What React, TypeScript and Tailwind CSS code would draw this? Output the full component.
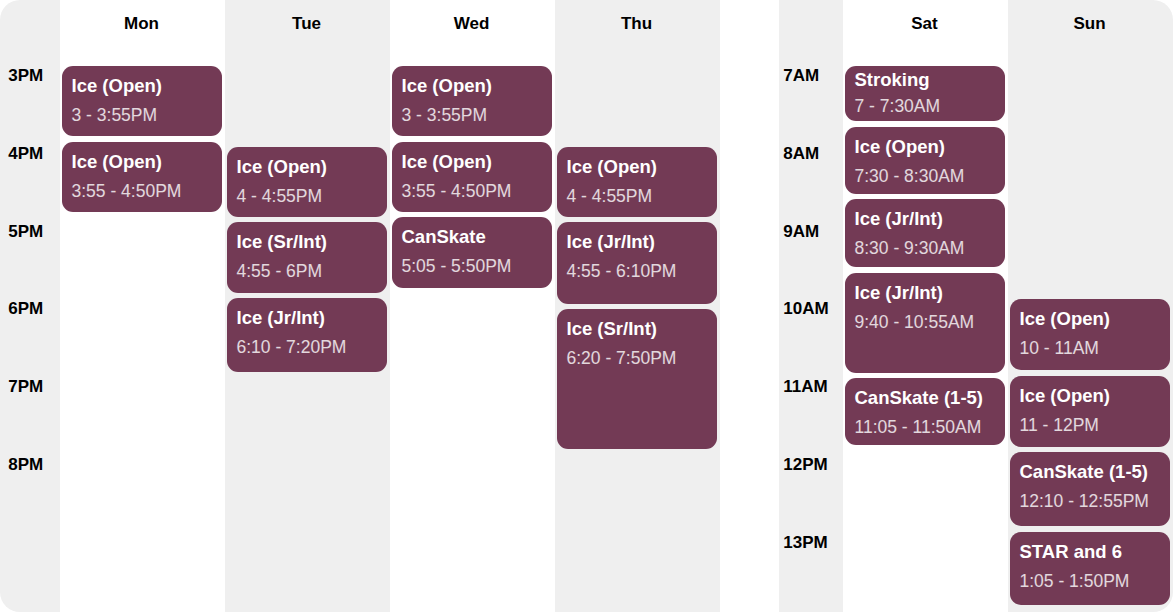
type Slot = {
  title: string;
  time: string;
  cls: string;
  compact?: boolean;
};

type Day = {
  name: string;
  bg: string;
  slots: Slot[];
};

const leftHours = ["3PM", "4PM", "5PM", "6PM", "7PM", "8PM"];
const rightHours = ["7AM", "8AM", "9AM", "10AM", "11AM", "12PM", "13PM"];

const weekdays: Day[] = [
  {
    name: "Mon",
    bg: "bg-white",
    slots: [
      { title: "Ice (Open)", time: "3 - 3:55PM", cls: "mt-[6px] h-[70px]" },
      { title: "Ice (Open)", time: "3:55 - 4:50PM", cls: "mt-[6px] h-[70px]" },
    ],
  },
  {
    name: "Tue",
    bg: "bg-[#efefef]",
    slots: [
      { title: "Ice (Open)", time: "4 - 4:55PM", cls: "mt-[87px] h-[70px]" },
      { title: "Ice (Sr/Int)", time: "4:55 - 6PM", cls: "mt-[5px] h-[71px]" },
      { title: "Ice (Jr/Int)", time: "6:10 - 7:20PM", cls: "mt-[5px] h-[74px]" },
    ],
  },
  {
    name: "Wed",
    bg: "bg-white",
    slots: [
      { title: "Ice (Open)", time: "3 - 3:55PM", cls: "mt-[6px] h-[70px]" },
      { title: "Ice (Open)", time: "3:55 - 4:50PM", cls: "mt-[6px] h-[70px]" },
      { title: "CanSkate", time: "5:05 - 5:50PM", cls: "mt-[5px] h-[71px]" },
    ],
  },
  {
    name: "Thu",
    bg: "bg-[#efefef]",
    slots: [
      { title: "Ice (Open)", time: "4 - 4:55PM", cls: "mt-[87px] h-[70px]" },
      { title: "Ice (Jr/Int)", time: "4:55 - 6:10PM", cls: "mt-[5px] h-[82px]" },
      { title: "Ice (Sr/Int)", time: "6:20 - 7:50PM", cls: "mt-[5px] h-[140px]" },
    ],
  },
];

const weekend: Day[] = [
  {
    name: "Sat",
    bg: "bg-white",
    slots: [
      { title: "Stroking", time: "7 - 7:30AM", cls: "mt-[6px] h-[55px]", compact: true },
      { title: "Ice (Open)", time: "7:30 - 8:30AM", cls: "mt-[6px] h-[67px]" },
      { title: "Ice (Jr/Int)", time: "8:30 - 9:30AM", cls: "mt-[5px] h-[68px]" },
      { title: "Ice (Jr/Int)", time: "9:40 - 10:55AM", cls: "mt-[6px] h-[100px]" },
      { title: "CanSkate (1-5)", time: "11:05 - 11:50AM", cls: "mt-[5px] h-[67px]" },
    ],
  },
  {
    name: "Sun",
    bg: "bg-[#efefef]",
    slots: [
      { title: "Ice (Open)", time: "10 - 11AM", cls: "mt-[239px] h-[71px]" },
      { title: "Ice (Open)", time: "11 - 12PM", cls: "mt-[6px] h-[71px]" },
      { title: "CanSkate (1-5)", time: "12:10 - 12:55PM", cls: "mt-[5px] h-[74px]" },
      { title: "STAR and 6", time: "1:05 - 1:50PM", cls: "mt-[6px] h-[73px]" },
    ],
  },
];

function SlotCard({ slot }: { slot: Slot }) {
  return (
    <div
      className={`${slot.cls} shrink-0 rounded-[11px] bg-[#733a55] pl-[10px] ${
        slot.compact ? "pt-[3.3px]" : "pt-[8.6px]"
      }`}
    >
      <div className="text-[18.5px] font-bold leading-[22px] text-white whitespace-nowrap">
        {slot.title}
      </div>
      <div
        className={`text-[17.5px] leading-[22px] text-white/80 whitespace-nowrap ${
          slot.compact ? "mt-[3.3px]" : "mt-[7.4px]"
        }`}
      >
        {slot.time}
      </div>
    </div>
  );
}

function DayColumn({ day }: { day: Day }) {
  return (
    <div className={`w-[165px] shrink-0 ${day.bg} pl-[1.5px] pr-[3.5px] flex flex-col`}>
      <div className="h-[60px] shrink-0 pt-[14.4px] text-center text-[17px] font-bold leading-[20px] text-black">
        {day.name}
      </div>
      {day.slots.map((s, i) => (
        <SlotCard key={i} slot={s} />
      ))}
    </div>
  );
}

function HourColumn({ hours, cls }: { hours: string[]; cls: string }) {
  return (
    <div className={`${cls} shrink-0 bg-[#efefef] flex flex-col`}>
      <div className="h-[60px] shrink-0" />
      <div className="mt-[6px]">
        {hours.map((h) => (
          <div key={h} className="h-[77.8px] text-[17px] font-bold leading-[20px] text-black">
            {h}
          </div>
        ))}
      </div>
    </div>
  );
}

export default function App() {
  return (
    <div
      className="w-[1173px] h-[612px] flex overflow-hidden rounded-[20px] bg-white"
      style={{ fontFamily: '"Liberation Sans", Arial, sans-serif' }}
    >
      {/* weekdays */}
      <HourColumn hours={leftHours} cls="w-[60px] pl-[8.3px]" />
      {weekdays.map((d) => (
        <DayColumn key={d.name} day={d} />
      ))}

      {/* gap (no friday) */}
      <div className="w-[59px] shrink-0 bg-white" />

      {/* weekend */}
      <HourColumn hours={rightHours} cls="w-[64px] pl-[4.3px]" />
      {weekend.map((d) => (
        <DayColumn key={d.name} day={d} />
      ))}
    </div>
  );
}
